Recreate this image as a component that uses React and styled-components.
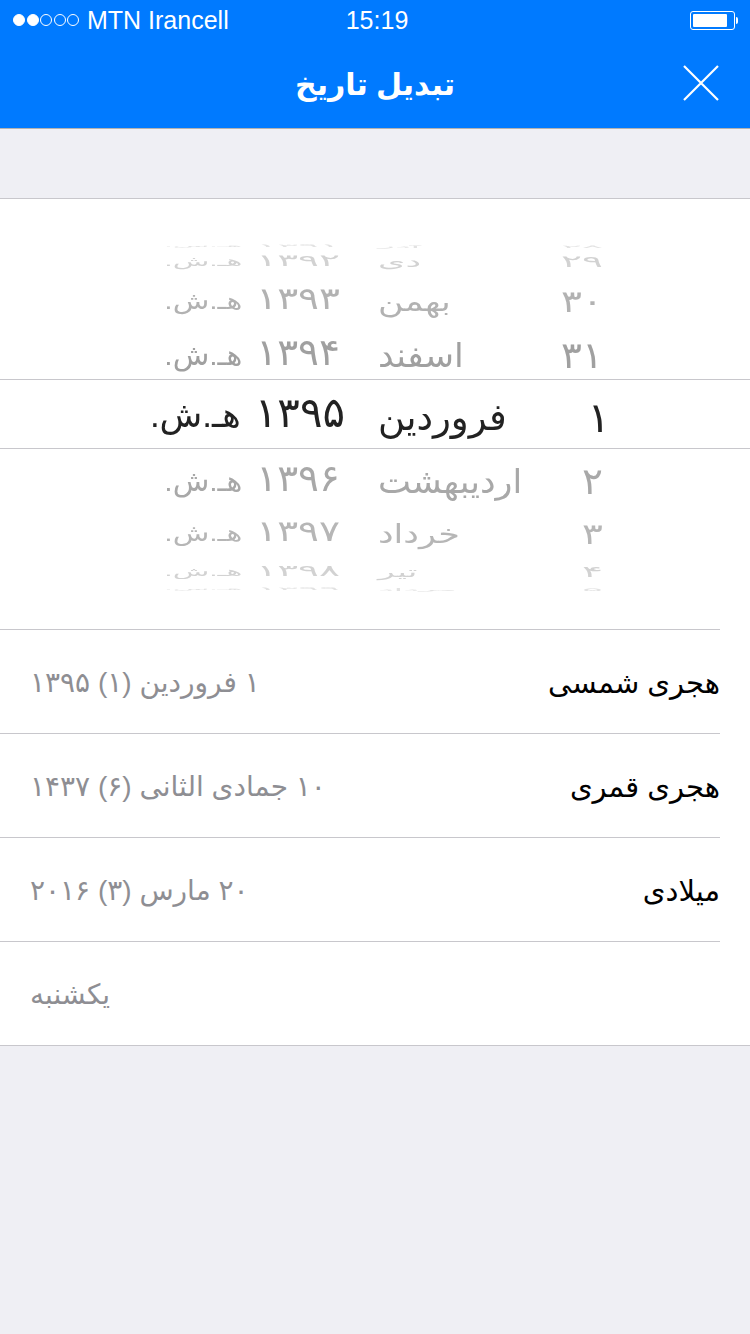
import React from 'react';
import styled, { createGlobalStyle } from 'styled-components';

const GlobalStyle = createGlobalStyle`
  html, body {
    margin: 0;
    padding: 0;
    background: #efeff4;
    font-family: "Liberation Sans", "DejaVu Sans", sans-serif;
  }
`;

const Page = styled.div`
  width: 750px;
  height: 1334px;
  overflow: hidden;
  background: #efeff4;
`;

const Header = styled.header`
  height: 128px;
  background: #007aff;
  color: #fff;
  border-bottom: 1px solid #b2b2b2;
`;

const StatusBar = styled.div`
  height: 40px;
  display: grid;
  grid-template-columns: 1fr auto 1fr;
  align-items: center;
  padding: 0 12px 0 13px;
  font-size: 25px;
`;

const Carrier = styled.div`
  display: flex;
  align-items: center;
`;

const Dots = styled.div`
  display: flex;
  gap: 1.5px;
  margin-right: 8px;
`;

const Dot = styled.span`
  box-sizing: border-box;
  width: 12px;
  height: 12px;
  border-radius: 50%;
  border: 1px solid #fff;
  background: ${props => (props.$on ? '#fff' : 'transparent')};
`;

const Clock = styled.div`
  margin-left: 3px;
  font-weight: 500;
`;

const Battery = styled.div`
  justify-self: end;
  display: flex;
  align-items: center;
  gap: 1px;
`;

const BatteryBody = styled.div`
  box-sizing: border-box;
  width: 45px;
  height: 19px;
  padding: 2px;
  border: 1px solid #fff;
  border-radius: 3px;
`;

const BatteryLevel = styled.div`
  width: 34px;
  height: 100%;
  background: #fff;
  border-radius: 1px;
`;

const BatteryTip = styled.div`
  width: 2px;
  height: 7px;
  background: #fff;
  border-radius: 0 2px 2px 0;
`;

const NavBar = styled.div`
  height: 88px;
  display: grid;
  grid-template-columns: 1fr auto 1fr;
  align-items: center;
  padding: 0 31px;
`;

const Title = styled.h1`
  grid-column: 2;
  margin: 0;
  direction: rtl;
  font-size: 30px;
  font-weight: 700;
`;

const CloseIcon = styled.svg`
  justify-self: end;
  width: 36px;
  height: 36px;
  margin-top: -2px;
`;

const Spacer = styled.div`
  height: 69px;
  border-bottom: 1px solid #c8c7cc;
`;

const Panel = styled.section`
  height: 846px;
  background: #fff;
  border-bottom: 1px solid #c8c7cc;
`;

const Picker = styled.div`
  height: 430px;
  padding-top: 41px;
  box-sizing: border-box;
`;

const Band = styled.div`
  height: 68px;
  border-top: 1px solid #c8c7cc;
  border-bottom: 1px solid #c8c7cc;
`;

const Wheel = styled.div`
  display: grid;
  grid-template-columns: 345px 213px 52px;
  height: ${props => props.$height}px;
  align-items: center;
  color: ${props => props.$color};
  line-height: ${props => props.$height}px;
  filter: blur(${props => props.$blur}px);
`;

const YearCell = styled.div`
  direction: rtl;
  white-space: nowrap;
  text-align: right;
  padding-right: ${props => props.$inset}px;
  transform: scaleY(${props => props.$squash});
`;

const MonthCell = styled.div`
  direction: rtl;
  white-space: nowrap;
  text-align: left;
  padding-left: 33px;
  font-size: ${props => props.$size}px;
  transform: scaleY(${props => props.$squash});
`;

const DayCell = styled.div`
  direction: rtl;
  white-space: nowrap;
  text-align: right;
  font-size: ${props => props.$size}px;
  padding-right: ${props => props.$inset}px;
  transform: scaleY(${props => props.$squash});
`;

const YearDigits = styled.span`
  font-size: ${props => props.$size}px;
`;

const YearSuffix = styled.span`
  font-size: ${props => props.$size}px;
  margin-right: 14px;
`;

const List = styled.div`
  direction: rtl;
`;

const ListRow = styled.div`
  height: 104px;
  box-sizing: border-box;
  margin-right: 30px;
  padding: 2px 0 0 30px;
  display: flex;
  justify-content: space-between;
  align-items: center;
  border-top: 1px solid #c8c7cc;
`;

const Label = styled.span`
  color: #000;
  font-size: 29px;
`;

const Value = styled.span`
  color: #8e8e93;
  font-size: 28px;
  margin-right: auto;
`;

const above = [
  { day: '۲۸', month: 'آذر', year: '۱۳۹۱', height: 5, squash: 0.1, color: '#e2e2e2', blur: 0.4 },
  { day: '۲۹', month: 'دی', year: '۱۳۹۲', height: 26, squash: 0.42, color: '#d2d2d2', blur: 0.3 },
  { day: '۳۰', month: 'بهمن', year: '۱۳۹۳', height: 54, squash: 0.78, color: '#b2b2b2', blur: 0.3 },
  { day: '۳۱', month: 'اسفند', year: '۱۳۹۴', height: 54, squash: 0.95, color: '#a0a0a0', blur: 0.3 },
];

const below = [
  { day: '۲', month: 'اردیبهشت', year: '۱۳۹۶', height: 58, squash: 0.95, color: '#a8a8a8', blur: 0.3 },
  { day: '۳', month: 'خرداد', year: '۱۳۹۷', height: 46, squash: 0.75, color: '#b6b6b6', blur: 0.3 },
  { day: '۴', month: 'تیر', year: '۱۳۹۸', height: 30, squash: 0.4, color: '#d2d2d2', blur: 0.3 },
  { day: '۵', month: 'مرداد', year: '۱۳۹۹', height: 5, squash: 0.1, color: '#e2e2e2', blur: 0.4 },
];

const dates = [
  { label: 'هجری شمسی', value: '۱ فروردین (۱) ۱۳۹۵' },
  { label: 'هجری قمری', value: '۱۰ جمادی الثانی (۶) ۱۴۳۷' },
  { label: 'میلادی', value: '۲۰ مارس (۳) ۲۰۱۶' },
  { label: '', value: 'یکشنبه' },
];

const PickerRow = ({ day, month, year, height, squash, color, blur, selected }) => (
  <Wheel $height={height} $color={color} $blur={blur}>
    <YearCell $squash={squash} $inset={selected ? 0 : 5}>
      <YearDigits $size={selected ? 42 : 39}>{year}</YearDigits>
      <YearSuffix $size={selected ? 35 : 30}>هـ.ش.</YearSuffix>
    </YearCell>
    <MonthCell $size={selected ? 37 : 35} $squash={squash}>{month}</MonthCell>
    <DayCell $size={selected ? 42 : 39} $inset={selected ? 0 : 7} $squash={squash}>{day}</DayCell>
  </Wheel>
);

const App = () => (
  <Page>
    <GlobalStyle />
    <Header>
      <StatusBar>
        <Carrier>
          <Dots>
            {[true, true, false, false, false].map((on, index) => <Dot key={index} $on={on} />)}
          </Dots>
          MTN Irancell
        </Carrier>
        <Clock>15:19</Clock>
        <Battery>
          <BatteryBody><BatteryLevel /></BatteryBody>
          <BatteryTip />
        </Battery>
      </StatusBar>
      <NavBar>
        <Title>تبدیل تاریخ</Title>
        <CloseIcon viewBox="0 0 36 36" fill="none" stroke="#fff" strokeWidth="2.2">
          <path d="M1 1 L35 35 M35 1 L1 35" />
        </CloseIcon>
      </NavBar>
    </Header>
    <Spacer />
    <Panel>
      <Picker>
        {above.map(row => <PickerRow key={row.day} {...row} />)}
        <Band>
          <PickerRow day="۱" month="فروردین" year="۱۳۹۵" height={66} squash={1} color="#222" blur={0} selected />
        </Band>
        {below.map(row => <PickerRow key={row.day} {...row} />)}
      </Picker>
      <List>
        {dates.map(date => (
          <ListRow key={date.value}>
            {date.label && <Label>{date.label}</Label>}
            <Value>{date.value}</Value>
          </ListRow>
        ))}
      </List>
    </Panel>
  </Page>
);

export default App;
